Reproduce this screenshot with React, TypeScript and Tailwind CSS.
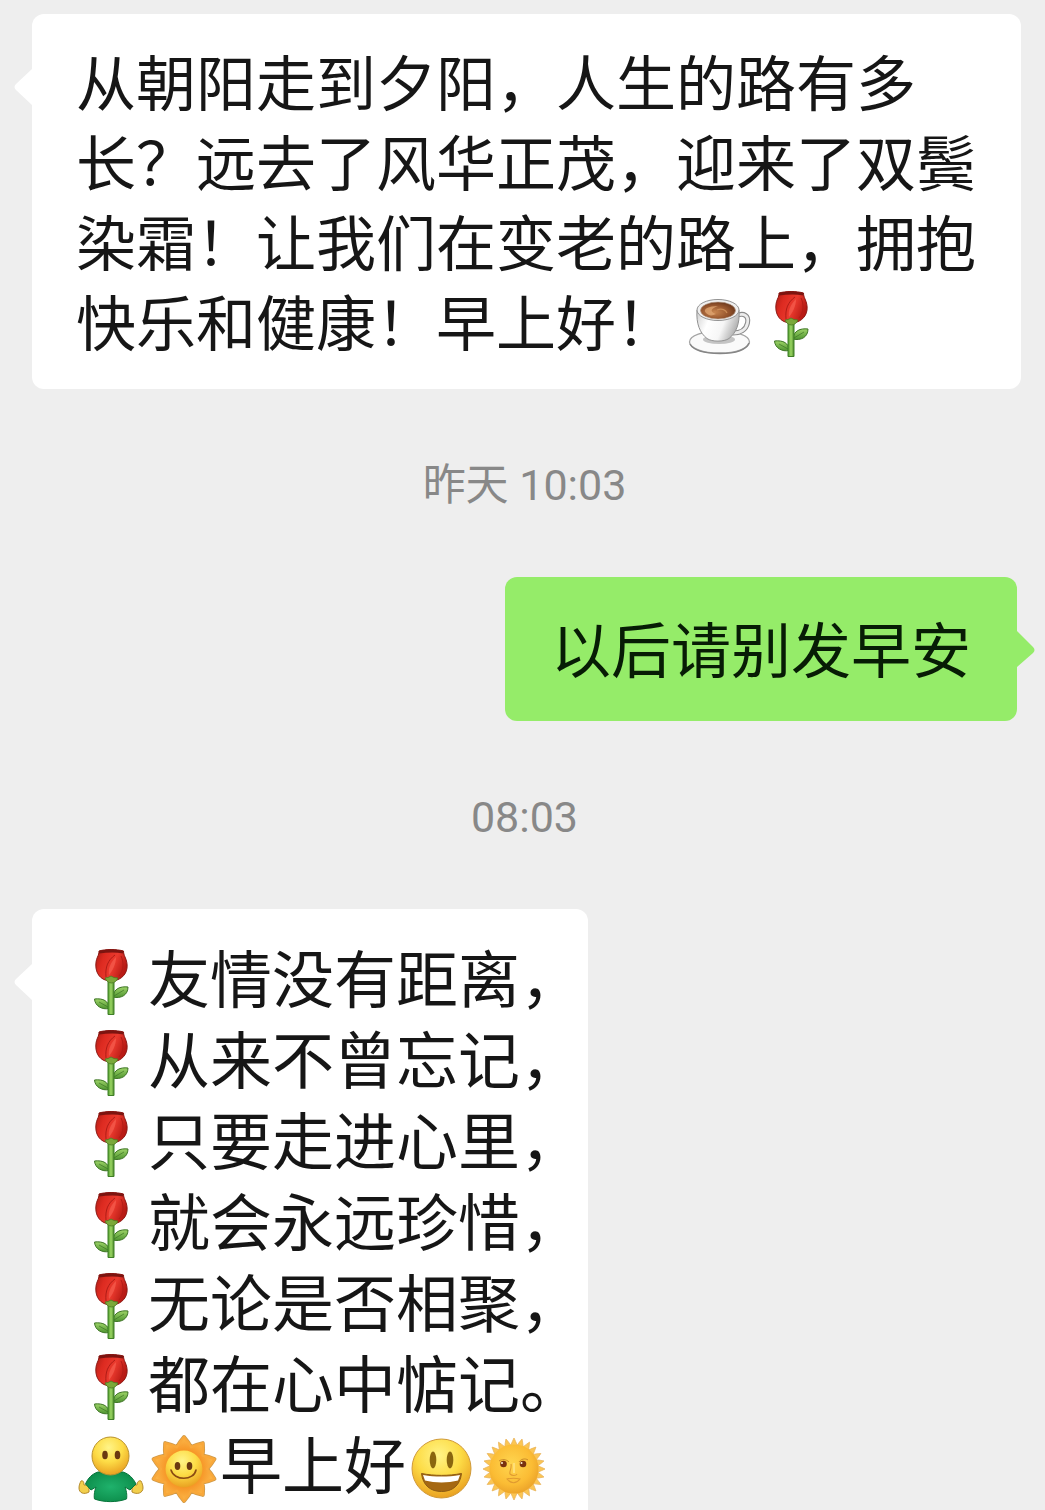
import type { ReactNode } from 'react';

type EmojiName = 'rose' | 'coffee' | 'hug' | 'sun' | 'grin' | 'sunface';

function rayPath(points: number, outer: number, inner: number) {
  const step = Math.PI / points;
  const at = (i: number, r: number) =>
    `${(36 + r * Math.sin(i * step)).toFixed(2)} ${(37 - r * Math.cos(i * step)).toFixed(2)}`;
  const mid = (inner + outer) / 2;
  let d = `M${at(0, outer)}`;
  for (let i = 0; i < points; i++) {
    const k = i * 2;
    d += `Q${at(k + 0.5, mid)} ${at(k + 1, inner)}Q${at(k + 1.5, mid)} ${at(k + 2, outer)}`;
  }
  return d + 'Z';
}

function Gradients() {
  return (
    <svg className="absolute size-0" aria-hidden="true">
      <defs>
        <linearGradient id="petal" x1="0" x2="1" y1="0" y2="0.4">
          <stop offset="0" stopColor="#a81c14" />
          <stop offset="0.3" stopColor="#dc2a20" />
          <stop offset="0.65" stopColor="#ea3a2e" />
          <stop offset="1" stopColor="#b81a14" />
        </linearGradient>
        <linearGradient id="stem" x1="0" x2="1" y1="0" y2="0">
          <stop offset="0" stopColor="#4d9a2c" />
          <stop offset="0.5" stopColor="#9bd663" />
          <stop offset="1" stopColor="#4d8a2c" />
        </linearGradient>
        <linearGradient id="leaf" x1="0" x2="0" y1="0" y2="1">
          <stop offset="0" stopColor="#9ed468" />
          <stop offset="1" stopColor="#4e9430" />
        </linearGradient>
        <linearGradient id="china" x1="0" x2="1" y1="0" y2="0.3">
          <stop offset="0" stopColor="#cfcfcf" />
          <stop offset="0.35" stopColor="#ffffff" />
          <stop offset="0.7" stopColor="#f6f6f6" />
          <stop offset="1" stopColor="#b5b5b5" />
        </linearGradient>
        <radialGradient id="brew" cx="0.4" cy="0.6" r="0.7">
          <stop offset="0" stopColor="#c98650" />
          <stop offset="0.6" stopColor="#93532c" />
          <stop offset="1" stopColor="#5f3119" />
        </radialGradient>
        <radialGradient id="skin" cx="0.45" cy="0.28" r="0.75">
          <stop offset="0" stopColor="#fff488" />
          <stop offset="0.5" stopColor="#fddc46" />
          <stop offset="1" stopColor="#e89c1e" />
        </radialGradient>
        <radialGradient id="shirt" cx="0.5" cy="0.5" r="0.6">
          <stop offset="0" stopColor="#1fb26c" />
          <stop offset="1" stopColor="#0b8a48" />
        </radialGradient>
        <radialGradient id="rays" cx="0.5" cy="0.5" r="0.5">
          <stop offset="0.5" stopColor="#f68f20" />
          <stop offset="1" stopColor="#fbb84a" />
        </radialGradient>
        <radialGradient id="gold" cx="0.45" cy="0.4" r="0.6">
          <stop offset="0" stopColor="#ffd650" />
          <stop offset="0.7" stopColor="#fbbc34" />
          <stop offset="1" stopColor="#eda52a" />
        </radialGradient>
      </defs>
    </svg>
  );
}

const drawings: Record<EmojiName, { label: string; art: ReactNode }> = {
  rose: {
    label: '玫瑰',
    art: (
      <>
        <path d="M37 50C38 43 44 40 52 41C52 49 45 53 37 51Z" fill="url(#leaf)" stroke="#3d7425" />
        <path d="M33 62.500C26 64 19 60 18.500 53C27 52 33 55 33 62.500Z" fill="url(#leaf)" stroke="#3d7425" />
        <path d="M38 50L48 44M32 61L23 56" stroke="#3d7425" strokeWidth="0.7" />
        <path d="M32 32H38V68.500H32Z" fill="url(#stem)" stroke="#3f7f27" />
        <path
          d="M23 5C23 7 22.500 9 21.500 11C20 14 19.500 18 20 22C21 30 27 35 35 35C43 35 50 30 51 22C51.500 18 50.500 14 49 11C48 9 47.500 7 47.500 5C40 3 30 3 23 5Z"
          fill="url(#petal)"
          stroke="#8c1813"
        />
        <path d="M23 5C30 3 40 3 47.500 5L47.500 7.500C39 6 31 6.500 23 7.500Z" fill="#7c1410" />
        <path d="M39 9C32 14 29 21 30 31M45 10C48 16 48 24 43 30" fill="none" stroke="#b01c16" strokeWidth="1" />
        <path d="M40 11C34 17 32 23 33 29C37 24 40 18 40 11Z" fill="#ff7a6a" opacity="0.4" />
        <path d="M29 32L32 31.500L35 30L38 31.500L42 32C41 35 38 37 35.500 37C33 37 30 35 29 32Z" fill="#7aa83a" stroke="#4a7a22" strokeWidth="0.8" />
      </>
    ),
  },
  coffee: {
    label: '咖啡',
    art: (
      <>
        <ellipse cx="35.500" cy="54" rx="30" ry="11" fill="#fafafa" stroke="#a5a5a5" strokeWidth="1.300" />
        <path d="M6 56C10 63 22 65.500 36 65.500C51 65.500 62 62 65 55" fill="none" stroke="#858585" strokeWidth="1.500" />
        <ellipse cx="35" cy="51.500" rx="16" ry="4.500" fill="#c4c4c4" />
        <path d="M52 28C60 24 65 28 63.500 35C62 42 56 45 49 45" fill="none" stroke="#8b8b8b" strokeWidth="5" />
        <path d="M52 28C60 24 65 28 63.500 35C62 42 56 45 49 45" fill="none" stroke="#ececec" strokeWidth="2.800" />
        <path d="M13 22C12 36 16 45 23 50.500C28 54 40 54 45 50.500C52 45 56 36 55 22Z" fill="url(#china)" stroke="#929292" />
        <ellipse cx="34" cy="22" rx="21" ry="10.500" fill="#f0f0f0" stroke="#929292" />
        <ellipse cx="34" cy="22.500" rx="17.500" ry="8.500" fill="url(#brew)" stroke="#b49a88" strokeWidth="0.600" />
        <path d="M22 25C18 21 25 18 34 18C27 21 25 23 32 26C28 28 25 28 22 25Z" fill="#e5ad78" opacity="0.700" />
        <path d="M33 22C38 20 42 22 43 25" fill="none" stroke="#c98a55" strokeWidth="1.200" />
      </>
    ),
  },
  hug: {
    label: '拥抱',
    art: (
      <>
        <path d="M13 60C8 63 3 61 3 56C3 53 4 51 5 49C7 48 8 50 8 53L13 53Z" fill="#f2cf4c" stroke="#b58a2a" />
        <path d="M56 60C61 63 67 61 67 56C67 53 66 51 65 49C63 48 61 50 61 53L56 53Z" fill="#f2cf4c" stroke="#b58a2a" />
        <path
          d="M22 40C16 42 12 46 9.500 52L15 58L20 55C18 60 18 65 18.500 67C28 70.500 41 70.500 50.500 67C51 65 51 60 49 55L54 58L60 52C57 46 53 42 47 40Z"
          fill="url(#shirt)"
          stroke="#08753b"
        />
        <ellipse cx="34.500" cy="24" rx="18.500" ry="19" fill="url(#skin)" stroke="#b9922d" />
        <ellipse cx="29" cy="23" rx="2.800" ry="4.300" fill="#6b3910" />
        <ellipse cx="41.500" cy="23" rx="2.800" ry="4.300" fill="#6b3910" />
      </>
    ),
  },
  sun: {
    label: '太阳',
    art: (
      <>
        <path d={rayPath(10, 32, 23)} fill="url(#rays)" stroke="#cf9a4a" strokeWidth="4" strokeLinejoin="round" />
        <path d={rayPath(10, 32, 23)} fill="url(#rays)" stroke="#f9a83a" strokeWidth="2.400" strokeLinejoin="round" />
        <circle cx="36" cy="37" r="18.500" fill="url(#skin)" />
        <ellipse cx="29.500" cy="34" rx="2.800" ry="4" fill="#6b3910" />
        <ellipse cx="41.500" cy="34" rx="2.800" ry="4" fill="#6b3910" />
        <path d="M23 38C26 49 46 49 48 38" fill="none" stroke="#8a4a12" strokeWidth="1.600" strokeLinecap="round" />
      </>
    ),
  },
  grin: {
    label: '大笑',
    art: (
      <>
        <circle cx="35.500" cy="36.500" r="29.500" fill="url(#skin)" stroke="#d09a3a" />
        <ellipse cx="27" cy="28" rx="3.300" ry="8.500" fill="#8a660f" />
        <ellipse cx="44" cy="28" rx="3.300" ry="8.500" fill="#8a660f" />
        <path d="M15.500 41.500C28 44 43 44 55.500 41.500C54 54 46 59.500 35.500 59.500C25 59.500 17 54 15.500 41.500Z" fill="#a56812" stroke="#8c5a14" />
        <path d="M17 43C29 45 42 45 54 43L52 48.500C42 51 29 51 19 48.500Z" fill="#ffffff" />
      </>
    ),
  },
  sunface: {
    label: '太阳脸',
    art: (
      <>
        <path d={rayPath(24, 31, 24)} fill="#fbc552" stroke="#e9b45c" strokeWidth="0.800" strokeLinejoin="round" />
        <circle cx="36" cy="37" r="24.500" fill="url(#gold)" />
        <path d="M21 29C24 27 28 27 31 30M41 30C43 27 47 26 50 28" fill="none" stroke="#c98a28" strokeWidth="1" />
        <circle cx="25.500" cy="32" r="3.300" fill="#7a3210" />
        <circle cx="45" cy="32" r="3.300" fill="#7a3210" />
        <circle cx="24" cy="31" r="1" fill="#fff2d0" />
        <circle cx="43.500" cy="31" r="1" fill="#fff2d0" />
        <path d="M33 32C34 36 31 40 32 42C34 44 38 44 39 42M29 47C33 46 38 46 42 47C38 52 33 52 29 47Z" fill="none" stroke="#e09a30" strokeWidth="1.100" />
        <path d="M36 31V41" stroke="#ffdf78" strokeWidth="2" />
      </>
    ),
  },
};

function Emoji({ name }: { name: EmojiName }) {
  const { label, art } = drawings[name];
  return (
    <svg viewBox="0 0 72 72" role="img" aria-label={label} className="-my-2 inline-block size-[72px] shrink-0">
      {art}
    </svg>
  );
}

function LeftTail() {
  return (
    <svg viewBox="0 0 20 40" className="absolute top-[54px] -left-[18px] h-10 w-5 fill-white" aria-hidden="true">
      <path d="M20 0L18 1L2 16Q-1 19 2 22L18 37L20 40Z" />
    </svg>
  );
}

function RightTail() {
  return (
    <svg viewBox="0 0 20 40" className="absolute top-[53px] -right-[18px] h-10 w-5 fill-[#95ec69]" aria-hidden="true">
      <path d="M0 0L2 1L18 17Q21 20 18 23L2 37L0 40Z" />
    </svg>
  );
}

function Timestamp({ children }: { children: ReactNode }) {
  return (
    <time className="block pt-[66px] pr-1 pb-[62px] text-center text-[43px] leading-[60px] text-[#888888]">{children}</time>
  );
}

const verses = ['友情没有距离，', '从来不曾忘记，', '只要走进心里，', '就会永远珍惜，', '无论是否相聚，', '都在心中惦记。'];

export default function App() {
  return (
    <main
      className="h-screen overflow-hidden bg-[#eeeeee] pt-3.5 pr-6 pl-8 font-[Roboto,'Noto_Sans_CJK_SC',sans-serif] text-[#161616]"
      lang="zh-CN"
    >
      <Gradients />
      <article className="relative rounded-xl bg-white px-11 pt-8 pb-[23px] text-[60px] leading-[80px]">
        <LeftTail />
        <p>
          从朝阳走到夕阳，人生的路有多长？远去了风华正茂，迎来了双鬓染霜！让我们在变老的路上，拥抱快乐和健康！早上好！
          <span className="inline-flex pl-2 align-[-14px]">
            <Emoji name="coffee" />
            <Emoji name="rose" />
          </span>
        </p>
      </article>

      <Timestamp>昨天 10:03</Timestamp>

      <article className="relative mr-1 ml-auto w-fit rounded-xl bg-[#95ec69] px-[46px] pt-9 pb-7 text-[60px] leading-[80px] text-[#071c05]">
        <RightTail />
        <p>以后请别发早安</p>
      </article>

      <Timestamp>08:03</Timestamp>

      <article className="relative w-fit rounded-xl bg-white pt-8 pr-1.5 pb-7 pl-11 text-[62px] leading-[81px]">
        <LeftTail />
        {verses.map((verse) => (
          <p key={verse} className="flex items-center whitespace-nowrap">
            <Emoji name="rose" />
            {verse}
          </p>
        ))}
        <p className="flex items-center whitespace-nowrap">
          <Emoji name="hug" />
          <Emoji name="sun" />
          早上好
          <Emoji name="grin" />
          <Emoji name="sunface" />
        </p>
      </article>
    </main>
  );
}
